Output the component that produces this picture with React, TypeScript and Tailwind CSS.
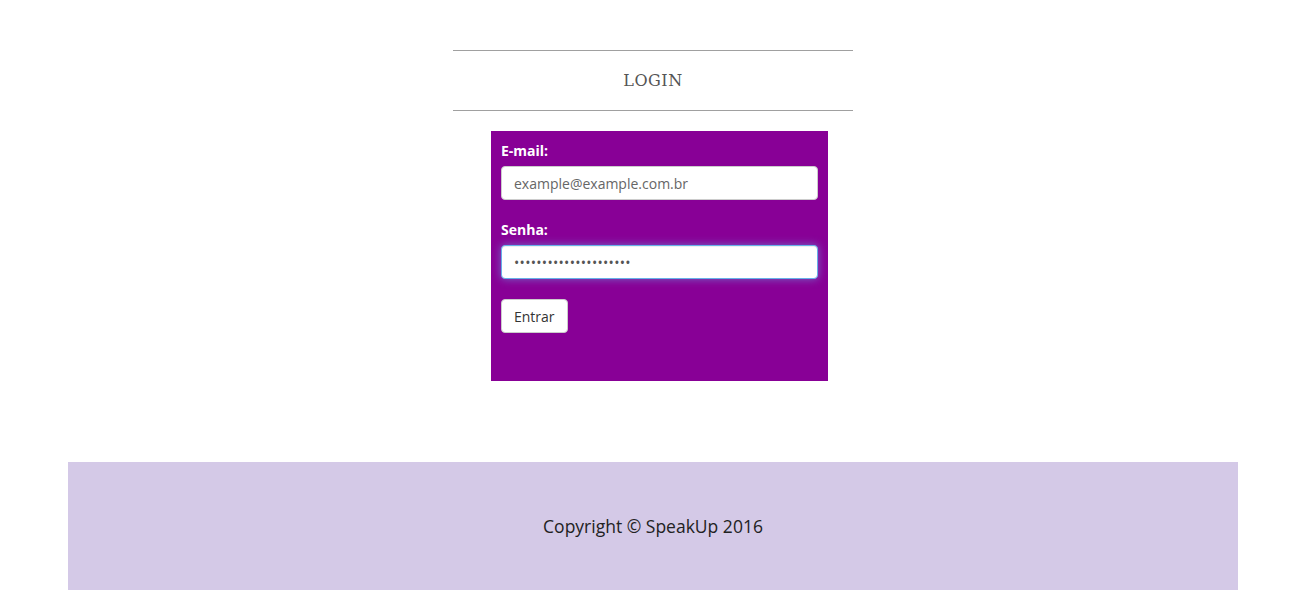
export default function App() {
  return (
    <div className="min-h-[607px] w-[1306px] bg-white font-['Open_Sans',sans-serif] text-[14px] text-[#333]">
      <div className="pt-[50px]">
        <div className="mx-auto w-[400px]">
          <div className="flex h-[61px] items-center justify-center border-y border-[#a0a0a0]">
            <h1 className="font-['DejaVu_Serif',serif] text-[16px] font-extralight tracking-[0.5px] text-[#555]">
              LOGIN
            </h1>
          </div>
          <form className="mt-[20px] ml-[38px] h-[250px] w-[337px] bg-[#880096] px-[10px] pt-[10px]">
            <label className="block text-[14px] font-bold leading-[20px] text-white">E-mail:</label>
            <input
              type="text"
              placeholder="example@example.com.br"
              className="mt-[5px] block h-[34px] w-full rounded-[4px] border border-[#ccc] bg-white px-[12px] text-[14px] text-[#555] placeholder:text-[#666] outline-none"
            />
            <label className="mt-[20px] block text-[14px] font-bold leading-[20px] text-white">Senha:</label>
            <input
              type="password"
              defaultValue="123456789012345678901"
              className="mt-[5px] block h-[34px] w-full rounded-[4px] border border-[#66afe9] bg-white px-[12px] text-[14px] tracking-[0.3px] text-[#555] shadow-[inset_0_1px_1px_rgba(0,0,0,0.075),0_0_8px_rgba(102,175,233,0.6)] outline-none"
            />
            <button
              type="button"
              className="mt-[20px] h-[34px] rounded-[4px] border border-[#ccc] bg-white px-[12px] text-[14px] text-[#333]"
            >
              Entrar
            </button>
          </form>
        </div>
      </div>
      <footer className="mx-auto mt-[81px] flex h-[128px] w-[1170px] items-center justify-center bg-[#d4c9e7]">
        <p className="text-[17.5px] text-[#222]">Copyright © SpeakUp 2016</p>
      </footer>
    </div>
  );
}
